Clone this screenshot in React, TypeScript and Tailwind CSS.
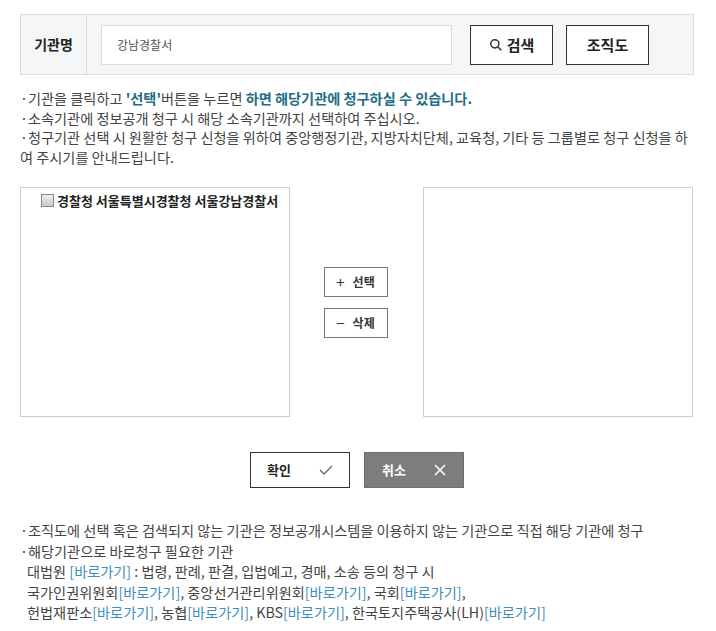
import React from 'react';

const link = 'text-[#3d8dbf]';

export default function App() {
  return (
    <div className="w-[716px] h-[631px] bg-white text-[#333] text-[14.2px] leading-[19.5px]" style={{ fontFamily: '"Noto Sans CJK KR", "Noto Sans", sans-serif' }}>
      <div className="pt-[14px] px-[20px] w-[714px]">
        <div className="flex h-[61px] border border-[#dcdcdc] bg-[#f5f6f7]">
          <div className="w-[66px] border-r border-[#dcdcdc] flex items-center justify-center font-bold text-[14px] text-[#222]">기관명</div>
          <div className="flex items-center pl-[14px]">
            <div className="w-[351px] h-[40px] bg-white border border-[#dcdcdc] flex items-center pl-[15px] text-[12px] text-[#555]">강남경찰서</div>
            <button className="ml-[18px] w-[83px] h-[40px] border border-[#333] bg-white flex items-center justify-center gap-1 font-bold text-[15px] text-[#222]">
              <svg width="14" height="14" viewBox="0 0 24 24" fill="none" stroke="#333" strokeWidth="2.6"><circle cx="10" cy="10" r="7" /><path d="M15 15l6 6" /></svg>
              검색
            </button>
            <button className="ml-[13px] w-[83px] h-[40px] border border-[#333] bg-white flex items-center justify-center font-bold text-[15px] text-[#222]">조직도</button>
          </div>
        </div>
        <div className="mt-[14px] text-[#444]">
          <p>·기관을 클릭하고 <span className="text-[#1f6e86] font-bold">'선택'</span>버튼을 누르면 <span className="text-[#1f6e86] font-bold">하면 해당기관에 청구하실 수 있습니다.</span></p>
          <p>·소속기관에 정보공개 청구 시 해당 소속기관까지 선택하여 주십시오.</p>
          <p>·청구기관 선택 시 원활한 청구 신청을 위하여 중앙행정기관, 지방자치단체, 교육청, 기타 등 그룹별로 청구 신청을 하여 주시기를 안내드립니다.</p>
        </div>
        <div className="mt-[20px] flex items-center">
          <div className="w-[270px] h-[230px] border border-[#ccc] self-start pt-[3px] pl-[20px]">
            <label className="flex items-center gap-[3px] font-bold text-[13px] text-[#222]">
              <span className="w-[13px] h-[13px] border border-[#888] bg-gradient-to-b from-[#eee] to-[#ccc]" />
              경찰청 서울특별시경찰청 서울강남경찰서
            </label>
          </div>
          <div className="w-[133px] flex flex-col items-center gap-[11px] pr-[2px]">
            <button className="w-[64px] h-[30px] border border-[#777] bg-white flex items-center justify-center gap-[8px] text-[12px] font-bold text-[#333]"><span className="text-[15px] font-normal">+</span>선택</button>
            <button className="w-[64px] h-[30px] border border-[#777] bg-white flex items-center justify-center gap-[8px] text-[12px] font-bold text-[#333]"><span className="text-[15px] font-normal">−</span>삭제</button>
          </div>
          <div className="w-[270px] h-[230px] border border-[#ccc]" />
        </div>
        <div className="mt-[35px] flex justify-center gap-[14px]">
          <button className="w-[100px] h-[36px] border border-[#333] bg-white flex items-center justify-center gap-[28px] font-bold text-[13px] text-[#222]">
            확인
            <svg width="14" height="12" viewBox="0 0 14 12" fill="none" stroke="#666" strokeWidth="1.3"><path d="M1 6l4 4 8-8" /></svg>
          </button>
          <button className="w-[100px] h-[36px] bg-[#7d7d7d] border border-[#6e6e6e] flex items-center justify-center gap-[28px] font-bold text-[13px] text-white">
            취소
            <svg width="12" height="12" viewBox="0 0 12 12" stroke="white" strokeWidth="1.5"><path d="M1 1l10 10M11 1L1 11" /></svg>
          </button>
        </div>
        <div className="mt-[32px] text-[#444] leading-[20.5px]">
          <p>·조직도에 선택 혹은 검색되지 않는 기관은 정보공개시스템을 이용하지 않는 기관으로 직접 해당 기관에 청구</p>
          <p>·해당기관으로 바로청구 필요한 기관</p>
          <div className="pl-[7px]">
            <p>대법원 <span className={link}>[바로가기]</span> : 법령, 판례, 판결, 입법예고, 경매, 소송 등의 청구 시</p>
            <p>국가인권위원회<span className={link}>[바로가기]</span>, 중앙선거관리위원회<span className={link}>[바로가기]</span>, 국회<span className={link}>[바로가기]</span>,</p>
            <p>헌법재판소<span className={link}>[바로가기]</span>, 농협<span className={link}>[바로가기]</span>, KBS<span className={link}>[바로가기]</span>, 한국토지주택공사(LH)<span className={link}>[바로가기]</span></p>
          </div>
        </div>
      </div>
    </div>
  );
}
